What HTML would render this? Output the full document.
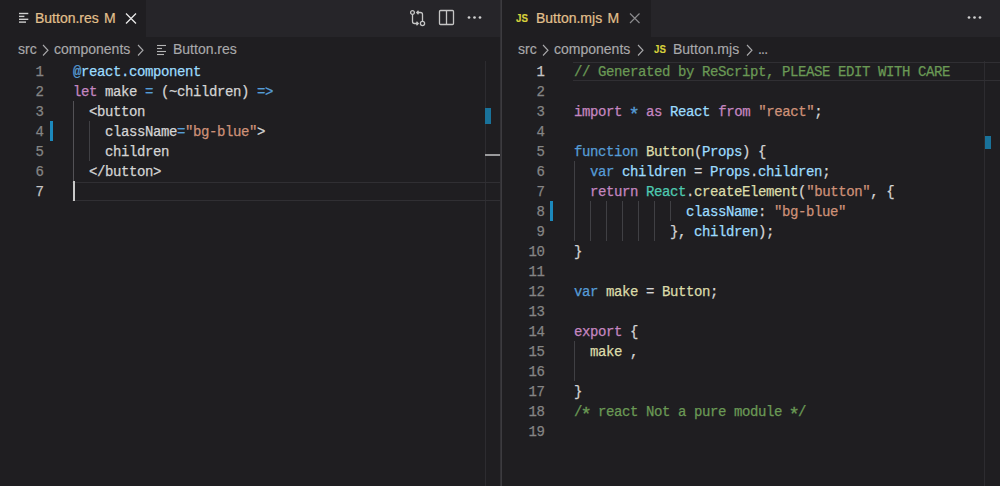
<!DOCTYPE html>
<html><head><meta charset="utf-8">
<style>
*{margin:0;padding:0;box-sizing:border-box}
html,body{width:1000px;height:486px;overflow:hidden;background:#1f1e21}
body{position:relative;font-family:"Liberation Sans",sans-serif}
.pane{position:absolute;top:0;height:486px;background:#1f1e21;overflow:hidden}
#L{left:0;width:500px}
#R{left:501px;width:499px}
#div{position:absolute;left:500px;top:0;width:2px;height:486px;background:#323135;z-index:5}
#div:after{content:"";position:absolute;left:0.5px;top:0;width:1px;height:486px;background:#3c3b3f}
.tabs{position:absolute;left:0;top:0;width:100%;height:37px;background:#262529}
.tab{position:absolute;left:0;top:0;height:37px;background:#1f1e21;color:#e2c08d;font-size:14px;white-space:nowrap}
.tab span{position:absolute;-webkit-text-stroke:0.2px currentColor;top:10px;line-height:17px}
.crumbs{position:absolute;left:0;top:36px;width:100%;height:25px;color:#a9a9ab;font-size:14px;white-space:nowrap}
.crumbs span{position:absolute;-webkit-text-stroke:0.15px currentColor;top:5px;line-height:17px}
.ed{position:absolute;left:0;top:61px;width:100%;height:425px}
.ln{position:absolute;left:0;width:43.5px;-webkit-text-stroke:0.25px currentColor;text-align:right;color:#858585;font-family:"Liberation Mono",monospace;font-size:14px;letter-spacing:-0.4px;line-height:20px;height:20px}
.code{position:absolute;white-space:pre;-webkit-text-stroke:0.25px currentColor;font-family:"Liberation Mono",monospace;font-size:14px;letter-spacing:-0.4px;line-height:20px;height:20px;color:#d4d4d4}
.k{color:#c586c0}.b{color:#569cd6}.lb{color:#9cdcfe}.y{color:#dcdcaa}.s{color:#ce9178}.c{color:#6a9955}.t{color:#4ec9b0}
.ast{display:inline-block;transform:translateY(2.5px) scale(1.35)}
.guide{position:absolute;width:1px;background:#404044}
.gb{position:absolute;width:3px;background:#1c89bd}
.curline{position:absolute;height:19px;border-top:1px solid #302f33;border-bottom:1px solid #302f33}
.cursor{position:absolute;width:2px;height:20px;background:#c8c8c8}
.ruler{position:absolute;top:61px;width:16px;height:425px;border-left:1px solid #2d2c30}
</style></head><body>
<div id="L" class="pane">
  <div class="tabs">
    <div class="tab" style="width:146px">
      <svg style="position:absolute;left:19px;top:12px" width="10" height="12" viewBox="0 0 10 12"><g stroke="#cfcfcf" stroke-width="1.4"><line x1="0" y1="1.5" x2="9.3" y2="1.5"/><line x1="0" y1="4.4" x2="5.4" y2="4.4"/><line x1="0" y1="7.3" x2="9.3" y2="7.3"/><line x1="0" y1="10.1" x2="7" y2="10.1"/></g></svg>
      <span style="left:35px">Button.res</span>
      <span style="left:104px">M</span>
      <svg style="position:absolute;left:125px;top:13px" width="12" height="11" viewBox="0 0 12 11"><path d="M1 0.5L11 10.5M11 0.5L1 10.5" stroke="#e8e8e8" stroke-width="1.3"/></svg>
    </div>
    <svg style="position:absolute;left:408px;top:8px" width="20" height="20" viewBox="0 0 20 20" fill="none" stroke="#c5c5c5" stroke-width="1.3">
      <circle cx="4.5" cy="4.5" r="1.9"/><circle cx="14.5" cy="15.5" r="2.1"/>
      <path d="M4.5 6.3V13.5Q4.5 15.5 6.5 15.5H10M8.5 13.8L10.2 15.5L8.5 17.2"/>
      <path d="M14.5 13.5V6.5Q14.5 4.5 12.5 4.5H9M10.5 2.8L8.8 4.5L10.5 6.2"/>
    </svg>
    <svg style="position:absolute;left:438px;top:9px" width="17" height="17" viewBox="0 0 17 17" fill="none" stroke="#c5c5c5" stroke-width="1.3">
      <rect x="1.5" y="1.5" width="14" height="14" rx="1"/><line x1="8.5" y1="1.5" x2="8.5" y2="15.5"/>
    </svg>
    <svg style="position:absolute;left:466px;top:15px" width="17" height="5" viewBox="0 0 17 5" fill="#d0d0d0"><circle cx="3" cy="2.5" r="1.35"/><circle cx="8.5" cy="2.5" r="1.35"/><circle cx="14" cy="2.5" r="1.35"/></svg>
  </div>
  <div class="crumbs">
    <span style="left:18px">src</span>
    <svg style="position:absolute;left:42px;top:7.5px" width="8" height="13" viewBox="0 0 8 13"><path d="M1 1L6 6.25L1 11.5" fill="none" stroke="#a9a9ab" stroke-width="1.1"/></svg>
    <span style="left:54px">components</span>
    <svg style="position:absolute;left:137px;top:7.5px" width="8" height="13" viewBox="0 0 8 13"><path d="M1 1L6 6.25L1 11.5" fill="none" stroke="#a9a9ab" stroke-width="1.1"/></svg>
    <svg style="position:absolute;left:157px;top:8px" width="10" height="12" viewBox="0 0 10 12"><g stroke="#b5b5b5" stroke-width="1.1"><line x1="0" y1="1.5" x2="9" y2="1.5"/><line x1="0" y1="4.5" x2="5" y2="4.5"/><line x1="0" y1="7.5" x2="9" y2="7.5"/><line x1="0" y1="10.5" x2="7" y2="10.5"/></g></svg>
    <span style="left:173px">Button.res</span>
  </div>
  <div class="ruler" style="left:485px"></div>
  <div style="position:absolute;left:485px;top:108px;width:6px;height:16px;background:#19729a"></div>
  <div style="position:absolute;left:485px;top:154px;width:15px;height:2px;background:#9a9a9c"></div>
  <div class="ed">
<div class="curline" style="top:121px;left:72px;width:428px"></div>
<div class="guide" style="left:73px;top:40px;height:80px;background:#535256"></div>
<div class="guide" style="left:89px;top:60px;height:40px"></div>
<div class="gb" style="left:50px;top:60px;height:20px"></div>
<div class="cursor" style="left:73px;top:120px"></div>
<div class="ln" style="top:1px;color:#858585">1</div>
<div class="code" style="top:1px;left:73px"><span class="b">@</span><span class="lb">react.component</span></div>
<div class="ln" style="top:21px;color:#858585">2</div>
<div class="code" style="top:21px;left:73px"><span class="k">let</span> make <span class="b">=</span> (~children) <span class="b">=&gt;</span></div>
<div class="ln" style="top:41px;color:#858585">3</div>
<div class="code" style="top:41px;left:73px">  &lt;button</div>
<div class="ln" style="top:61px;color:#858585">4</div>
<div class="code" style="top:61px;left:73px">    className<span class="b">=</span><span class="s">"bg-blue"</span>&gt;</div>
<div class="ln" style="top:81px;color:#858585">5</div>
<div class="code" style="top:81px;left:73px">    children</div>
<div class="ln" style="top:101px;color:#858585">6</div>
<div class="code" style="top:101px;left:73px">  &lt;/button&gt;</div>
<div class="ln" style="top:121px;color:#c6c6c6">7</div>
</div>
</div>
<div id="div"></div>
<div id="R" class="pane">
  <div class="tabs">
    <div class="tab" style="width:150px">
      <span style="left:15px;font-size:11px;font-weight:bold;color:#d8d23c;top:10px;transform:scaleX(0.88);transform-origin:left">JS</span>
      <span style="left:35px">Button.mjs</span>
      <span style="left:106.5px">M</span>
      <svg style="position:absolute;left:128px;top:13px" width="11" height="11" viewBox="0 0 11 11"><path d="M1 0.5L10.5 10M10.5 0.5L1 10" stroke="#8a8a8c" stroke-width="1.2"/></svg>
    </div>
    <svg style="position:absolute;left:465px;top:15px" width="17" height="5" viewBox="0 0 17 5" fill="#d0d0d0"><circle cx="3" cy="2.5" r="1.35"/><circle cx="8.5" cy="2.5" r="1.35"/><circle cx="14" cy="2.5" r="1.35"/></svg>
  </div>
  <div class="crumbs">
    <span style="left:17px">src</span>
    <svg style="position:absolute;left:41px;top:7.5px" width="8" height="13" viewBox="0 0 8 13"><path d="M1 1L6 6.25L1 11.5" fill="none" stroke="#a9a9ab" stroke-width="1.1"/></svg>
    <span style="left:53px">components</span>
    <svg style="position:absolute;left:136px;top:7.5px" width="8" height="13" viewBox="0 0 8 13"><path d="M1 1L6 6.25L1 11.5" fill="none" stroke="#a9a9ab" stroke-width="1.1"/></svg>
    <span style="left:153px;font-size:11px;font-weight:bold;color:#d8d23c;top:5px;transform:scaleX(0.88);transform-origin:left">JS</span>
    <span style="left:172px">Button.mjs</span>
    <svg style="position:absolute;left:245px;top:7.5px" width="8" height="13" viewBox="0 0 8 13"><path d="M1 1L6 6.25L1 11.5" fill="none" stroke="#a9a9ab" stroke-width="1.1"/></svg>
    <span style="left:257px;letter-spacing:-0.8px">...</span>
  </div>
  <div class="ruler" style="left:483px"></div>
  <div style="position:absolute;left:484px;top:136px;width:6px;height:13px;background:#19729a"></div>
  <div class="ed">
<div class="curline" style="top:1px;left:72px;width:427px"></div>
<div class="guide" style="left:73px;top:100px;height:80px"></div>
<div class="guide" style="left:89px;top:140px;height:40px"></div>
<div class="guide" style="left:105px;top:140px;height:40px"></div>
<div class="guide" style="left:121px;top:140px;height:40px"></div>
<div class="guide" style="left:137px;top:140px;height:40px"></div>
<div class="guide" style="left:153px;top:140px;height:40px"></div>
<div class="guide" style="left:169px;top:140px;height:20px"></div>
<div class="guide" style="left:73px;top:280px;height:40px"></div>
<div class="gb" style="left:49px;top:140px;height:20px"></div>
<div class="ln" style="top:1px;color:#c6c6c6">1</div>
<div class="code" style="top:1px;left:73px"><span class="c">// Generated by ReScript, PLEASE EDIT WITH CARE</span></div>
<div class="ln" style="top:21px;color:#858585">2</div>
<div class="ln" style="top:41px;color:#858585">3</div>
<div class="code" style="top:41px;left:73px"><span class="k">import</span> <span class="b ast">*</span> <span class="k">as</span> <span class="lb">React</span> <span class="k">from</span> <span class="s">"react"</span>;</div>
<div class="ln" style="top:61px;color:#858585">4</div>
<div class="ln" style="top:81px;color:#858585">5</div>
<div class="code" style="top:81px;left:73px"><span class="b">function</span> <span class="y">Button</span>(<span class="lb">Props</span>) {</div>
<div class="ln" style="top:101px;color:#858585">6</div>
<div class="code" style="top:101px;left:73px">  <span class="b">var</span> <span class="lb">children</span> = <span class="lb">Props</span>.<span class="lb">children</span>;</div>
<div class="ln" style="top:121px;color:#858585">7</div>
<div class="code" style="top:121px;left:73px">  <span class="k">return</span> <span class="t">React</span>.<span class="y">createElement</span>(<span class="s">"button"</span>, {</div>
<div class="ln" style="top:141px;color:#858585">8</div>
<div class="code" style="top:141px;left:73px">              <span class="lb">className</span>: <span class="s">"bg-blue"</span></div>
<div class="ln" style="top:161px;color:#858585">9</div>
<div class="code" style="top:161px;left:73px">            }, <span class="lb">children</span>);</div>
<div class="ln" style="top:181px;color:#858585">10</div>
<div class="code" style="top:181px;left:73px">}</div>
<div class="ln" style="top:201px;color:#858585">11</div>
<div class="ln" style="top:221px;color:#858585">12</div>
<div class="code" style="top:221px;left:73px"><span class="b">var</span> <span class="y">make</span> = <span class="y">Button</span>;</div>
<div class="ln" style="top:241px;color:#858585">13</div>
<div class="ln" style="top:261px;color:#858585">14</div>
<div class="code" style="top:261px;left:73px"><span class="k">export</span> {</div>
<div class="ln" style="top:281px;color:#858585">15</div>
<div class="code" style="top:281px;left:73px">  <span class="y">make</span> ,</div>
<div class="ln" style="top:301px;color:#858585">16</div>
<div class="ln" style="top:321px;color:#858585">17</div>
<div class="code" style="top:321px;left:73px">}</div>
<div class="ln" style="top:341px;color:#858585">18</div>
<div class="code" style="top:341px;left:73px"><span class="c">/<span class="ast">*</span> react Not a pure module <span class="ast">*</span>/</span></div>
<div class="ln" style="top:361px;color:#858585">19</div>
</div>
</div>
</body></html>
